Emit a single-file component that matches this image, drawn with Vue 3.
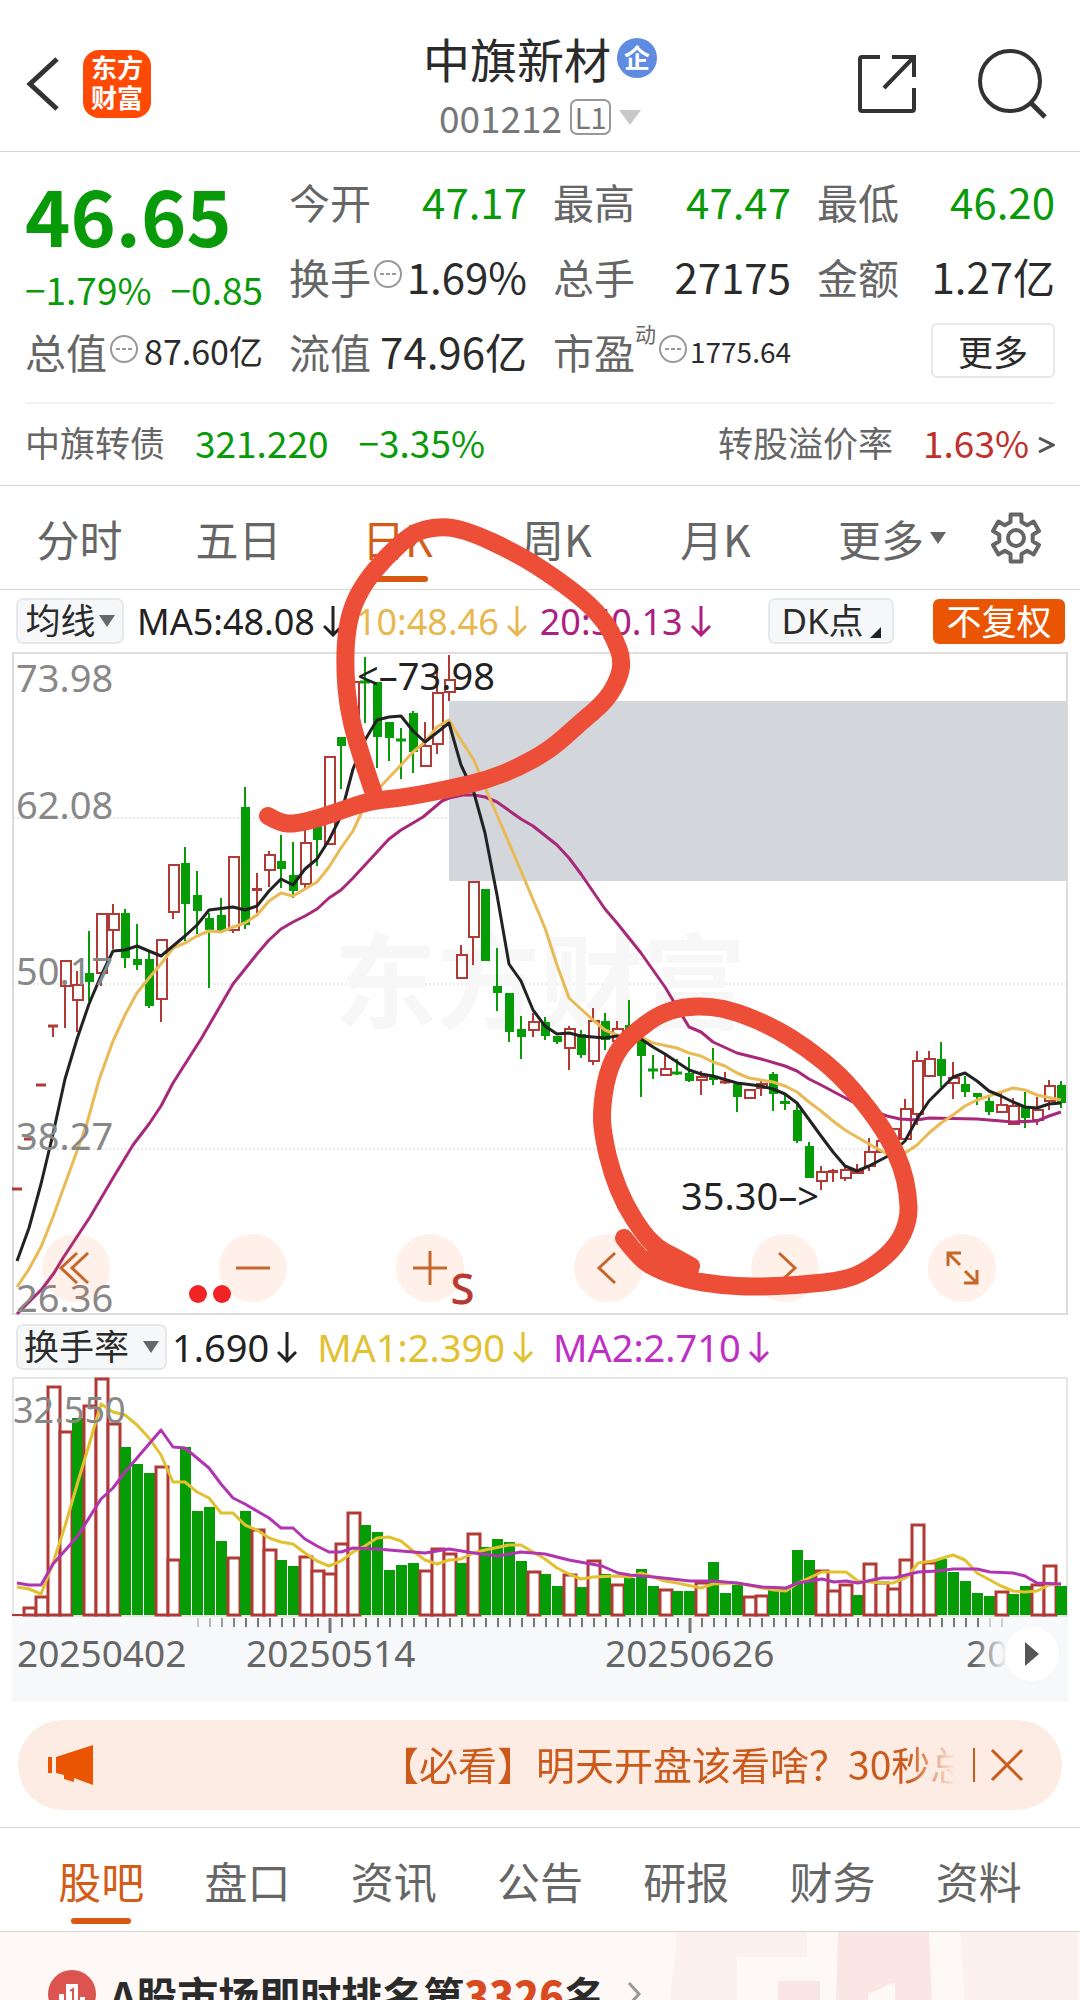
<script setup>
import { ref } from 'vue'

const periods = ['分时', '五日', '日K', '周K', '月K']
const activePeriod = ref('日K')
const sections = ['股吧', '盘口', '资讯', '公告', '研报', '财务', '资料']
const activeSection = ref('股吧')

const cx = (i) => 17 + 12 * i

// Six-toothed settings wheel
const gear = Array.from({ length: 6 }, (_, k) => {
  const at = (r, deg) => {
    const a = ((deg + k * 60 - 90) * Math.PI) / 180
    return `${(27 + r * Math.cos(a)).toFixed(1)} ${(27 + r * Math.sin(a)).toFixed(1)}`
  }
  return [at(17, -19), at(24, -13), at(24, 13), at(17, 19)].join(' L')
}).join(' L')

// kind, high, open/close top, open/close bottom, low
const candles = [
  'r 1189 1189 1189 1189', 'r 1139 1139 1139 1139', 'r 1085 1085 1085 1085', 'r 1026 1026 1026 1037',
  'r 960 960 987 1028', 'r 971 984 1001 1032', 'g 931 973 982 1001', 'r 913 913 974 986',
  'r 904 913 931 949', 'g 909 913 958 968', 'g 924 959 965 970', 'g 952 959 1006 1008',
  'r 939 939 1000 1022', 'r 864 864 913 919', 'g 847 863 904 941', 'g 871 895 911 934',
  'g 913 918 930 988', 'g 898 915 931 933', 'r 856 856 931 933', 'g 787 807 925 929',
  'r 873 888 891 913', 'r 851 854 871 887', 'g 835 861 869 888', 'g 842 875 891 898',
  'r 830 842 885 888', 'g 820 820 840 866', 'r 756 756 845 845', 'g 737 737 746 789',
  'r 681 681 735 735', 'g 657 681 683 723', 'g 682 682 737 768', 'g 722 722 738 761',
  'g 728 739 741 779', 'g 711 713 752 773', 'r 722 745 767 767', 'r 667 692 745 754',
  'r 655 679 693 701', 'r 945 954 979 979', 'r 881 881 938 965', 'g 889 889 961 961',
  'g 948 986 993 1011', 'g 993 993 1032 1042', 'g 1016 1029 1037 1059', 'r 1013 1021 1031 1037',
  'g 1017 1022 1036 1040', 'g 1036 1036 1042 1044', 'r 1026 1028 1049 1070', 'g 1030 1034 1055 1058',
  'r 1008 1020 1062 1065', 'g 1013 1021 1040 1050', 'r 1021 1028 1042 1042', 'g 1000 1025 1035 1035',
  'g 1038 1038 1056 1097', 'g 1055 1069 1071 1079', 'r 1054 1068 1076 1076', 'g 1059 1072 1074 1075',
  'g 1057 1073 1081 1082', 'r 1071 1076 1081 1095', 'g 1048 1076 1080 1085', 'r 1072 1081 1083 1084',
  'g 1084 1084 1097 1112', 'r 1089 1089 1099 1099', 'r 1081 1083 1089 1096', 'g 1072 1074 1094 1111',
  'g 1095 1101 1104 1110', 'g 1103 1110 1141 1143', 'g 1142 1146 1178 1178', 'r 1166 1171 1182 1190',
  'r 1169 1170 1173 1182', 'r 1165 1169 1179 1181', 'r 1164 1170 1174 1174', 'r 1138 1151 1167 1171',
  'r 1140 1140 1153 1153', 'r 1128 1128 1140 1140', 'r 1099 1108 1140 1140', 'r 1051 1060 1115 1125',
  'r 1051 1058 1077 1077', 'g 1042 1059 1076 1087', 'r 1062 1077 1084 1099', 'g 1076 1084 1092 1097',
  'g 1093 1093 1097 1105', 'g 1095 1101 1112 1115', 'r 1091 1104 1113 1113', 'r 1098 1105 1125 1125',
  'g 1092 1107 1118 1128', 'r 1097 1109 1121 1125', 'r 1080 1085 1102 1110', 'g 1081 1085 1103 1108',
].map((row, i) => {
  const [kind, high, top, bottom, low] = row.split(' ')
  return { x: cx(i), up: kind === 'r', high: +high, top: +top, bottom: +bottom, low: +low }
})

const ma5 = '17,1261 29,1228 41,1184 53,1134 65,1079 77,1039 89,1004 100,978 113,951 125,950 137,946 161,956 173,946 185,936 197,925 209,910 233,907 245,910 257,906 269,891 281,879 293,885 305,869 317,859 329,840 340,818 353,769 365,740 377,720 389,717 401,716 413,731 425,742 449,723 461,765 468,780 474,793 485,833 497,895 509,964 521,981 533,1010 545,1026 557,1034 569,1033 581,1036 605,1038 617,1036 641,1039 653,1047 665,1054 677,1062 689,1070 701,1074 713,1076 737,1083 761,1086 773,1089 785,1094 797,1103 821,1136 833,1152 845,1166 857,1171 869,1166 890,1155 905,1141 917,1119 929,1101 941,1089 953,1077 965,1073 977,1081 989,1091 1001,1096 1013,1102 1025,1107 1037,1108 1049,1104 1061,1103'
const ma10 = '17,1287 29,1269 41,1247 53,1217 65,1184 77,1151 87,1123 99,1080 113,1041 125,1015 137,993 149,978 161,964 173,948 185,943 197,936 209,931 221,932 233,927 245,923 257,915 269,901 281,893 293,896 305,889 317,882 329,867 341,848 353,831 365,805 382,785 401,765 413,752 425,742 437,727 449,720 461,740 474,760 487,792 497,815 521,871 545,928 557,965 569,998 581,1009 593,1020 605,1030 617,1035 641,1037 653,1043 677,1048 689,1053 701,1056 713,1062 725,1066 737,1073 749,1078 761,1080 773,1082 785,1086 797,1092 809,1102 821,1111 833,1121 845,1130 869,1144 887,1154 905,1153 917,1145 929,1133 941,1123 953,1115 965,1106 977,1100 989,1096 1001,1092 1013,1088 1025,1090 1037,1095 1061,1100'
const ma20 = '17,1314 42,1289 54,1273 63,1258 90,1217 113,1178 133,1145 149,1124 161,1106 173,1083 201,1039 233,984 257,954 269,940 281,929 293,922 305,916 317,909 329,898 341,890 353,878 365,865 377,852 389,839 401,830 413,823 423,817 442,801 449,798 463,795 474,795 485,797 497,802 521,819 533,826 557,845 569,858 581,874 605,909 617,923 641,953 665,987 677,1007 689,1027 701,1032 713,1042 737,1053 761,1059 785,1066 797,1071 809,1079 821,1085 853,1102 870,1110 887,1116 900,1119 917,1120 929,1118 977,1119 1013,1122 1037,1121 1049,1116 1061,1112'

const bars = (
  'r1614 r1607 r1596 r1386 r1431 g1418 r1405 r1378 r1423 g1447 g1464 g1473 r1466 r1559 g1447 g1511 g1507 g1541 r1557 g1511 ' +
  'r1529 r1549 g1560 g1566 r1556 r1570 r1573 r1543 r1512 g1525 g1532 g1570 g1565 g1563 r1570 r1548 r1553 g1563 r1533 g1547 ' +
  'g1539 g1542 g1561 r1571 g1574 g1586 r1574 g1587 r1560 g1574 r1584 g1578 g1569 g1586 r1589 g1591 g1591 r1582 g1562 g1593 ' +
  'g1585 r1596 r1595 g1590 g1589 g1550 g1560 r1570 r1590 r1584 g1595 r1563 r1582 r1588 r1559 r1524 r1562 g1559 g1572 g1581 ' +
  'g1593 g1596 r1591 g1594 g1586 r1584 r1565 g1586'
).split(' ').map((b, i) => ({ x: cx(i), up: b[0] === 'r', top: +b.slice(1) }))

const turnover1 = '17,1587 29,1589 41,1594 53,1563 65,1526 77,1485 89,1445 101,1404 113,1412 125,1415 137,1425 149,1438 161,1455 173,1482 185,1482 197,1492 209,1498 221,1513 233,1513 245,1525 257,1530 269,1538 281,1542 293,1544 305,1553 317,1561 329,1566 341,1561 353,1552 365,1546 377,1538 389,1537 401,1541 413,1551 425,1560 437,1564 449,1560 461,1559 473,1553 485,1550 509,1545 521,1545 545,1559 557,1568 569,1574 581,1579 593,1577 617,1576 630,1577 641,1573 665,1581 677,1583 701,1588 713,1584 737,1583 762,1588 774,1590 786,1591 798,1583 822,1572 846,1572 858,1581 882,1583 893,1583 907,1577 918,1563 933,1561 953,1555 965,1560 977,1573 1001,1586 1013,1591 1025,1592 1037,1591 1049,1585 1061,1584'
const turnover2 = '17,1583 29,1585 41,1585 53,1564 77,1537 101,1499 113,1488 125,1472 137,1458 161,1430 173,1447 185,1448 197,1458 209,1468 221,1484 233,1498 245,1504 257,1511 269,1518 281,1528 293,1528 305,1539 317,1546 329,1552 341,1552 353,1548 377,1549 401,1551 425,1553 449,1549 474,1553 498,1556 521,1552 545,1554 569,1560 602,1566 618,1573 630,1575 654,1577 690,1581 713,1581 737,1583 762,1587 786,1588 798,1583 822,1579 834,1582 846,1581 858,1583 882,1578 894,1578 918,1572 938,1571 953,1569 977,1569 990,1572 1013,1573 1025,1576 1037,1583 1061,1584'

const ticks = Array.from({ length: 68 }, (_, k) => {
  const x = 198 + 12 * k
  const major = x === 330 || x === 690
  const fade = k < 4 ? 0.35 + k * 0.18 : k > 65 ? 0.3 : 1
  return { x, major, fade }
})

// Hand-drawn marks: quadratic segments through the midpoints of the traced points
const smooth = (list) => {
  const p = list.split(' ').map((s) => s.split(',').map(Number))
  let d = `M${p[0][0]} ${p[0][1]}`
  for (let i = 1; i < p.length - 1; i++) {
    const mx = (p[i][0] + p[i + 1][0]) / 2
    const my = (p[i][1] + p[i + 1][1]) / 2
    d += ` Q${p[i][0]} ${p[i][1]} ${mx} ${my}`
  }
  const last = p[p.length - 1]
  return d + ` L${last[0]} ${last[1]}`
}
const markHigh = smooth('268,816 280,823 295,824 320,818 345,809 370,801 408,797 453,788 487,780 517,768 550,750 580,723 607,700 620,676 622,658 615,640 606,623 585,600 544,570 510,550 475,534 455,528 441,527 425,529 410,535 386,557 365,582 352,607 346,635 345,670 348,707 357,743 375,797')
const markLow = smooth('624,1238 637,1255 653,1268 687,1280 720,1285 753,1287 800,1285 847,1280 873,1267 897,1246 909,1220 908,1193 902,1167 890,1140 870,1110 840,1075 807,1048 773,1027 737,1012 710,1006 683,1007 660,1014 640,1028 620,1046 607,1073 601,1113 604,1140 612,1173 625,1205 643,1233 657,1248 673,1256 691,1266')
</script>

<template>
  <main class="app">
    <header class="top">
      <div class="top-side">
        <button class="plain" aria-label="返回">
          <svg width="36" height="60" viewBox="0 0 36 60"><path d="M33 5 L6 30 L33 55" fill="none" stroke="#333" stroke-width="5" /></svg>
        </button>
        <a class="brand" href="#">东方<br />财富</a>
      </div>
      <div class="title">
        <h1>中旗新材<span class="ent">企</span></h1>
        <div class="code">001212<span class="level">L1</span><i class="tri tri-light"></i></div>
      </div>
      <div class="top-side top-right">
        <button class="plain" aria-label="分享">
          <svg width="62" height="62" viewBox="0 0 62 62"><path d="M24 4 H6 Q4 4 4 6 V56 Q4 58 6 58 H56 Q58 58 58 56 V35 M36 4 H58 V24 M58 4 L28 35" fill="none" stroke="#333" stroke-width="4" /></svg>
        </button>
        <button class="plain" aria-label="搜索">
          <svg width="72" height="72" viewBox="0 0 72 72"><circle cx="34" cy="33" r="30" fill="none" stroke="#333" stroke-width="4" /><path d="M55 55 L69 69" stroke="#333" stroke-width="5" /></svg>
        </button>
      </div>
    </header>

    <section class="quote">
      <div class="grid">
        <div class="main-price green">
          <strong>46.65</strong>
          <p><span>−1.79%</span><span>−0.85</span></p>
        </div>
        <div class="cell"><span class="lab">今开</span><span class="green">47.17</span></div>
        <div class="cell"><span class="lab">最高</span><span class="green">47.47</span></div>
        <div class="cell"><span class="lab">最低</span><span class="green">46.20</span></div>
        <div class="cell"><span class="lab">换手<svg class="more" viewBox="0 0 30 30"><circle cx="15" cy="15" r="13" /><path d="M7 15h4m2 0h4m2 0h4" /></svg></span><span>1.69%</span></div>
        <div class="cell"><span class="lab">总手</span><span>27175</span></div>
        <div class="cell"><span class="lab">金额</span><span>1.27亿</span></div>
        <div class="cell"><span class="lab">总值<svg class="more" viewBox="0 0 30 30"><circle cx="15" cy="15" r="13" /><path d="M7 15h4m2 0h4m2 0h4" /></svg></span><span class="mid">87.60亿</span></div>
        <div class="cell"><span class="lab">流值</span><span>74.96亿</span></div>
        <div class="cell"><span class="lab">市盈<sup>动</sup><svg class="more" viewBox="0 0 30 30"><circle cx="15" cy="15" r="13" /><path d="M7 15h4m2 0h4m2 0h4" /></svg></span><span class="small">1775.64</span></div>
        <div class="cell cell-end"><button class="more-btn">更多</button></div>
      </div>
      <a class="bond" href="#">
        <span class="bond-name">中旗转债</span>
        <span class="green">321.220</span>
        <span class="green bond-pct">−3.35%</span>
        <span class="bond-name bond-rate">转股溢价率</span>
        <span class="red">1.63%</span>
        <svg width="18" height="22" viewBox="0 0 18 22"><path d="M2 4 L16 11 L2 18" fill="none" stroke="#555" stroke-width="3" /></svg>
      </a>
    </section>

    <nav class="periods">
      <button v-for="p in periods" :key="p" :class="['period', { on: p === activePeriod }]" @click="activePeriod = p">{{ p }}</button>
      <button class="period-more">更多<i class="tri tri-small"></i></button>
      <button class="plain gear" aria-label="设置">
        <svg width="54" height="54" viewBox="0 0 54 54" fill="none" stroke="#666" stroke-width="4" stroke-linejoin="round">
          <path :d="`M${gear}Z`" />
          <circle cx="27" cy="27" r="8" />
        </svg>
      </button>
    </nav>

    <div class="legend legend-ma">
      <button class="chip">均线<i class="tri tri-small"></i></button>
      <span class="ink">MA5:48.08<svg class="down" viewBox="0 0 20 32"><path d="M10 1V30M1 21L10 30L19 21" /></svg></span>
      <span class="gold">10:48.46<svg class="down" viewBox="0 0 20 32"><path d="M10 1V30M1 21L10 30L19 21" /></svg></span>
      <span class="plum">20:50.13<svg class="down" viewBox="0 0 20 32"><path d="M10 1V30M1 21L10 30L19 21" /></svg></span>
      <button class="chip dk">DK点<i class="corner"></i></button>
      <button class="adjust">不复权</button>
    </div>

    <div class="kchart">
      <svg class="plot" viewBox="0 652 1080 664" role="img" aria-label="日K线图">
        <g fill="none" stroke="#ddd" stroke-width="2">
          <rect x="13" y="653" width="1054" height="661" />
          <path d="M13 818H1067M13 984H1067M13 1149H1067" stroke="#d4d4d4" stroke-width="1" stroke-dasharray="2 2" />
        </g>
        <text class="watermark" x="334" y="1021">东方财富</text>
        <rect x="449" y="701" width="618" height="180" fill="#d3d6db" />
        <g v-for="c in candles" :key="c.x" :class="c.up ? 'up' : 'down-day'">
          <path :d="`M${c.x} ${c.high}V${c.top}M${c.x} ${c.bottom}V${c.low}`" stroke-width="2" />
          <path v-if="c.bottom - c.top < 4" :d="`M${c.x - 5} ${(c.top + c.bottom) / 2}H${c.x + 5}`" stroke-width="3" />
          <rect v-else-if="c.up" :x="c.x - 4" :y="c.top + 1" width="10" :height="c.bottom - c.top - 2" stroke-width="2" />
          <rect v-else class="solid" :x="c.x - 4" :y="c.top" width="9" :height="c.bottom - c.top" />
        </g>
        <g fill="none" stroke-width="3" stroke-linejoin="round">
          <polyline :points="ma20" stroke="#a8287a" />
          <polyline :points="ma10" stroke="#e9ba55" />
          <polyline :points="ma5" stroke="#222" />
        </g>
        <g class="scale">
          <text x="16" y="692">73.98</text>
          <text x="16" y="819">62.08</text>
          <text x="16" y="985">50.17</text>
          <text x="16" y="1150">38.27</text>
          <text x="16" y="1312">26.36</text>
        </g>
        <g class="peak">
          <text x="357" y="690">&lt;–73.98</text>
          <text x="681" y="1210">35.30–&gt;</text>
        </g>
        <circle cx="198" cy="1294" r="9" fill="#f02424" />
        <circle cx="222" cy="1294" r="9" fill="#f02424" />
        <text class="sell" x="451" y="1304">S</text>
      </svg>
      <div class="tools">
        <button aria-label="最早"><svg viewBox="0 0 68 68"><path d="M35 19L19 34L35 49M46 19L30 34L46 49" /></svg></button>
        <button aria-label="缩小"><svg viewBox="0 0 68 68"><path d="M17 34H51" /></svg></button>
        <button aria-label="放大"><svg viewBox="0 0 68 68"><path d="M17 34H51M34 17V51" /></svg></button>
        <button aria-label="左移"><svg viewBox="0 0 68 68"><path d="M41 19L25 34L41 49" /></svg></button>
        <button aria-label="右移"><svg viewBox="0 0 68 68"><path d="M28 19L44 34L28 49" /></svg></button>
        <button aria-label="全屏"><svg viewBox="0 0 68 68"><path d="M33 19H20V32M20 19L32 31M36 49H49V36M49 49L37 37" /></svg></button>
      </div>
      <svg class="marks" viewBox="0 652 1080 664" aria-hidden="true">
        <g fill="none" stroke="#ed4e38" stroke-width="18" stroke-linecap="round" stroke-linejoin="round">
          <path :d="markHigh" />
          <path :d="markLow" />
          <path d="M652 1258 L690 1270" />
        </g>
      </svg>
    </div>

    <div class="legend legend-vol">
      <button class="chip wide">换手率<i class="tri tri-small"></i></button>
      <span class="ink">1.690<svg class="down" viewBox="0 0 20 32"><path d="M10 1V30M1 21L10 30L19 21" /></svg></span>
      <span class="yellow">MA1:2.390<svg class="down" viewBox="0 0 20 32"><path d="M10 1V30M1 21L10 30L19 21" /></svg></span>
      <span class="violet">MA2:2.710<svg class="down" viewBox="0 0 20 32"><path d="M10 1V30M1 21L10 30L19 21" /></svg></span>
    </div>

    <svg class="plot" viewBox="0 1377 1080 325" role="img" aria-label="换手率图">
      <defs>
        <linearGradient id="axisFade" x1="0" x2="1"><stop offset="0" stop-color="#f7f8fa" stop-opacity="0" /><stop offset="1" stop-color="#f7f8fa" /></linearGradient>
      </defs>
      <rect x="13" y="1378" width="1054" height="238" fill="none" stroke="#ccc" stroke-width="1" />
      <g v-for="b in bars" :key="b.x" :class="b.up ? 'up' : 'down-day'">
        <path v-if="b.top > 1612" :d="`M${b.x - 5} 1615H${b.x + 7}`" stroke-width="2" />
        <rect v-else-if="b.up" class="bar" :x="b.x - 5" :y="b.top + 1" width="12" :height="1614 - b.top" stroke-width="3" />
        <rect v-else class="solid" :x="b.x - 5" :y="b.top" width="11" :height="1615 - b.top" />
      </g>
      <g fill="none" stroke-width="3" stroke-linejoin="round">
        <polyline :points="turnover1" stroke="#e2c131" />
        <polyline :points="turnover2" stroke="#b035b0" />
      </g>
      <text class="turn-scale" x="13" y="1423">32.550</text>
      <rect x="12" y="1617" width="1056" height="85" fill="#f7f8fa" />
      <path v-for="t in ticks" :key="t.x" :d="`M${t.x} 1618V${t.major ? 1633 : 1627}`" stroke="#777" :stroke-width="t.major ? 3 : 2" :opacity="t.fade" />
      <g class="dates">
        <text x="17" y="1667">20250402</text>
        <text x="246" y="1667">20250514</text>
        <text x="605" y="1667">20250626</text>
        <text x="966" y="1667">20</text>
      </g>
      <rect x="975" y="1636" width="32" height="36" fill="url(#axisFade)" />
      <circle cx="1032" cy="1654" r="27" fill="#fff" />
      <path d="M1025 1642L1039 1654L1025 1666Z" fill="#555" />
    </svg>

    <div class="notice">
      <svg width="48" height="42" viewBox="0 0 48 42" fill="#ea5504"><path d="M1 13h4v16H1zM9 13L46 1V41L27 34V38L17 35V31L9 29z" /></svg>
      <a class="notice-text" href="#">【必看】明天开盘该看啥？30秒总</a>
      <button class="plain close" aria-label="关闭">
        <svg width="34" height="34" viewBox="0 0 34 34"><path d="M2 2L32 32M32 2L2 32" stroke="#cb5a1c" stroke-width="3" /></svg>
      </button>
    </div>

    <nav class="sections">
      <button v-for="s in sections" :key="s" :class="{ on: s === activeSection }" @click="activeSection = s">{{ s }}</button>
    </nav>

    <section class="rank">
      <svg class="rank-art" viewBox="0 0 410 69" aria-hidden="true">
        <path d="M7 0H137V25H67V69H0L4 30z" fill="#fdf1ef" />
        <path d="M168 0H259L262 69H225V50L198 62V69H166z" fill="#fae6e5" />
        <path d="M290 0H408V69H294z" fill="#fdf1ef" />
        <path d="M108 49H150V69H108z" fill="#fae6e5" />
      </svg>
      <a class="rank-line" href="#">
        <svg width="48" height="48" viewBox="0 0 48 48"><circle cx="24" cy="24" r="24" fill="#dc5450" /><path d="M11 38V24H16V38zM18 38V14H30V38zM32 38V27H37V38z" fill="#fff" /><path d="M22 21L25 19V32" fill="none" stroke="#dc5450" stroke-width="2" /></svg>
        <span class="rank-text">A股市场即时排名第<b>3326</b>名</span>
        <svg width="14" height="26" viewBox="0 0 14 26"><path d="M2 2L12 13L2 24" fill="none" stroke="#999" stroke-width="3" /></svg>
      </a>
    </section>
  </main>
</template>

<style>
body {
  background: #fff;
}
</style>

<style scoped>
.app {
  display: flex;
  flex-direction: column;
  height: 100vh;
  overflow: hidden;
  background: #fff;
  color: #2b2b2b;
  font-family: "Noto Sans CJK SC", "Noto Sans", sans-serif;
}
.app > * {
  flex: none;
}
button {
  margin: 0;
  padding: 0;
  border: 0;
  background: none;
  color: inherit;
  font: inherit;
  cursor: pointer;
}
a {
  color: inherit;
  text-decoration: none;
}
svg {
  display: block;
}
.green {
  color: #099a09;
}
.red {
  color: #c0302c;
}
.tri {
  display: inline-block;
  border: 8px solid transparent;
  border-top: 12px solid #666;
  border-bottom: 0;
}
.tri-light {
  border-width: 15px 11px 0;
  border-top-color: #c8c8c8;
}

/* Header */
.top {
  display: grid;
  grid-template-columns: 1fr auto 1fr;
  height: 151px;
  padding: 0 32px 0 24px;
  border-bottom: 1px solid #d5d5d5;
}
.top-side {
  display: flex;
  align-items: center;
  gap: 23px;
  padding-top: 17px;
}
.top-right {
  justify-content: flex-end;
  gap: 58px;
}
.brand {
  width: 68px;
  height: 68px;
  border-radius: 16px;
  background: #ff4a06;
  color: #fff;
  font-size: 26px;
  font-weight: 700;
  line-height: 30px;
  padding-top: 2px;
  box-sizing: border-box;
  text-align: center;
}
.title {
  padding: 28px 0 0 8px;
}
.title h1 {
  display: flex;
  align-items: center;
  justify-content: center;
  gap: 6px;
  margin: 0;
  font-size: 47px;
  font-weight: 400;
  line-height: 60px;
}
.ent {
  width: 40px;
  height: 40px;
  border-radius: 50%;
  background: #5f8be0;
  color: #fff;
  font-size: 26px;
  font-weight: 700;
  line-height: 38px;
  text-align: center;
}
.code {
  display: flex;
  align-items: center;
  justify-content: center;
  gap: 8px;
  color: #777;
  font-size: 37px;
  line-height: 58px;
}
.level {
  box-sizing: border-box;
  width: 41px;
  height: 36px;
  border: 2px solid #999;
  border-radius: 7px;
  font-size: 29px;
  line-height: 31px;
  text-align: center;
}

/* Quote panel */
.quote {
  padding: 11px 25px 0;
  border-bottom: 1px solid #d5d5d5;
}
.grid {
  display: grid;
  grid-template-columns: repeat(4, minmax(0, 1fr));
  grid-auto-rows: 75px;
  column-gap: 26px;
  padding-bottom: 14px;
  border-bottom: 2px solid #f1f1f1;
}
.main-price {
  grid-row: span 2;
}
.main-price strong {
  display: block;
  font-size: 77px;
  font-weight: 700;
  line-height: 102px;
}
.main-price p {
  display: flex;
  justify-content: space-between;
  margin: 0;
  font-size: 37px;
  line-height: 48px;
}
.cell {
  display: flex;
  align-items: center;
  justify-content: space-between;
  font-size: 42px;
  line-height: 60px;
  white-space: nowrap;
}
.cell-end {
  justify-content: flex-end;
}
.lab {
  display: flex;
  align-items: center;
  color: #666;
  font-size: 41px;
}
.lab sup {
  align-self: flex-start;
  font-size: 21px;
  line-height: 24px;
}
.more {
  width: 30px;
  height: 30px;
  margin: 0 0 3px 2px;
  fill: none;
  stroke: #999;
  stroke-width: 2;
}
.mid {
  font-size: 34px;
}
.small {
  font-size: 28px;
}
.more-btn {
  width: 124px;
  height: 55px;
  border: 2px solid #e8e8e8;
  border-radius: 6px;
  font-size: 35px;
  line-height: 47px;
}
.bond {
  display: flex;
  align-items: center;
  box-sizing: border-box;
  height: 81px;
  padding-bottom: 6px;
  font-size: 37px;
}
.bond-name {
  margin-right: 30px;
  color: #666;
  font-size: 35px;
}
.bond-pct {
  margin-left: 30px;
}
.bond-rate {
  margin-left: auto;
}
.bond svg {
  margin: 6px 0 0 8px;
}

/* Period tabs */
.periods {
  display: flex;
  align-items: center;
  height: 103px;
  border-bottom: 1px solid #d5d5d5;
  color: #666;
  font-size: 43px;
}
.period {
  position: relative;
  flex: 159 1 0;
  height: 103px;
}
.period-more {
  display: flex;
  flex: 194 1 0;
  align-items: center;
  justify-content: center;
  gap: 6px;
}
.gear {
  display: flex;
  flex: 91 1 0;
}
.on {
  color: #d35d17;
}
.on::after {
  content: "";
  position: absolute;
  bottom: 7px;
  left: 50%;
  width: 60px;
  height: 6px;
  margin-left: -30px;
  border-radius: 3px;
  background: #d9580f;
}

/* Legends */
.legend {
  display: flex;
  align-items: center;
  height: 62px;
  padding: 0 16px;
  font-family: "Noto Sans", "Noto Sans CJK SC", sans-serif;
  white-space: nowrap;
}
.legend span {
  display: flex;
  align-items: center;
}
.legend-ma {
  gap: 13px;
  font-size: 36px;
}
.legend-vol {
  gap: 20px;
  height: 61px;
  font-size: 38px;
}
.down {
  width: 20px;
  height: 32px;
  margin-left: 8px;
  fill: none;
  stroke: currentColor;
  stroke-width: 3;
}
.chip {
  display: flex;
  box-sizing: border-box;
  align-items: center;
  justify-content: center;
  gap: 3px;
  width: 108px;
  height: 46px;
  border: 2px solid #e6e8ea;
  border-radius: 7px;
  background: #f6f7f9;
  font-size: 35px;
  line-height: 40px;
}
.chip.wide {
  gap: 14px;
  width: 151px;
  margin-right: -15px;
}
.dk {
  gap: 6px;
  width: 126px;
  margin-left: auto;
}
.corner {
  align-self: flex-end;
  margin-bottom: 4px;
  border-bottom: 11px solid #222;
  border-left: 11px solid transparent;
}
.adjust {
  width: 132px;
  height: 45px;
  margin-left: 26px;
  margin-right: -1px;
  border-radius: 6px;
  background: #ea5504;
  color: #fff;
  font-size: 35px;
  line-height: 43px;
}
.ink {
  color: #222;
}
.gold {
  color: #e9b750;
}
.plum {
  color: #ad2082;
}
.yellow {
  color: #e2c131;
}
.violet {
  color: #c02fc4;
}

/* Charts */
.kchart {
  position: relative;
}
.plot {
  width: 100%;
  height: auto;
  font-family: "Noto Sans", "Noto Sans CJK SC", sans-serif;
}
.up {
  fill: none;
  stroke: #b13a36;
}
.bar {
  fill: #fff;
}
.down-day {
  fill: none;
  stroke: #089c08;
}
.solid {
  fill: #059c05;
  stroke: none;
}
.scale {
  fill: #888;
  font-size: 38px;
}
.turn-scale {
  fill: #888;
  font-size: 36px;
}
.peak {
  fill: #222;
  font-size: 38px;
}
.dates {
  fill: #666;
  font-size: 37px;
}
.watermark {
  fill: #f7f7f7;
  font-family: "Noto Sans CJK SC", sans-serif;
  font-size: 103px;
  font-weight: 700;
}
.sell {
  fill: #b43a34;
  stroke: #b43a34;
  stroke-width: 1px;
  font-size: 42px;
}
.tools {
  position: absolute;
  right: 84px;
  bottom: 14px;
  left: 42px;
  display: flex;
  justify-content: space-between;
}
.tools button {
  width: 68px;
  height: 68px;
  border-radius: 50%;
  background: rgba(255, 92, 10, 0.09);
}
.tools svg {
  width: 68px;
  height: 68px;
  fill: none;
  stroke: #c5662b;
  stroke-width: 3;
}
.marks {
  position: absolute;
  top: 0;
  left: 0;
  width: 100%;
  height: 100%;
  overflow: visible;
  pointer-events: none;
}

/* Notice */
.notice {
  display: flex;
  align-items: center;
  height: 90px;
  margin: 18px 18px 17px;
  padding: 0 38px 0 29px;
  box-sizing: border-box;
  border-radius: 45px;
  background: #fcece3;
  color: #cb5a1c;
}
.notice-text {
  flex: 1;
  margin-left: 285px;
  padding-bottom: 4px;
  overflow: hidden;
  font-size: 39px;
  white-space: nowrap;
  mask-image: linear-gradient(to right, #000 92%, transparent);
}
.close {
  margin-left: 18px;
  padding-left: 15px;
  border-left: 2px solid #cb5a1c;
}

/* Section tabs */
.sections {
  display: flex;
  height: 103px;
  padding: 0 28px;
  border-top: 1px solid #d5d5d5;
  border-bottom: 1px solid #d5d5d5;
  color: #666;
  font-size: 43px;
}
.sections button {
  position: relative;
  flex: 1 1 0;
}

/* Ranking */
.app > .rank {
  position: relative;
  flex: 1 0 0;
  padding: 32px 48px 0;
  background: #fef9f7;
}
.rank-art {
  position: absolute;
  top: 0;
  right: 0;
  width: 410px;
  height: 69px;
}
.rank-line {
  display: flex;
  align-items: center;
  gap: 14px;
  font-size: 41px;
  font-weight: 700;
  line-height: 60px;
}
.rank-text b {
  color: #d94a20;
}
.rank-line svg:last-child {
  margin-left: 8px;
}
</style>
